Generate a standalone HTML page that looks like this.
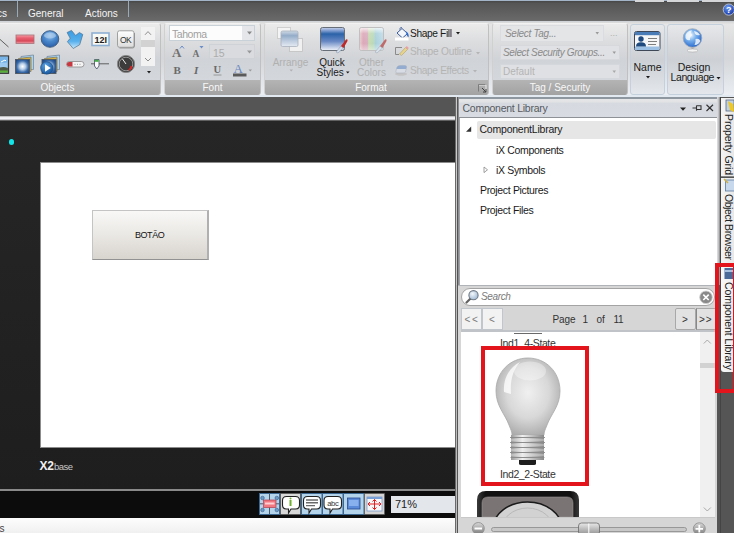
<!DOCTYPE html>
<html><head><meta charset="utf-8">
<style>
*{margin:0;padding:0;box-sizing:border-box}
html,body{width:734px;height:533px;overflow:hidden;background:#555;font-family:"Liberation Sans",sans-serif}
.a{position:absolute}
svg{overflow:visible}
#tabbar{left:0;top:0;width:734px;height:21px;background:linear-gradient(#4a4a4a 0,#4a4a4a 1px,#555 2px,#5e5e5e 50%,#6a6a6a 100%);border-top:1px solid #a4b4c8}
.tab{color:#f4f4f4;font-size:10px;top:7px;white-space:nowrap}
.tsep{top:0;width:1px;height:16px;background:#9aaabb}
#ribbon{left:0;top:20px;width:734px;height:77px;background:linear-gradient(#6c6c6c 0,#6c6c6c 1px,#c8cdd4 1px,#d8d9da 2px,#dcdcdc 3px,#e6e6e6 4px,#d8d9db 35%,#d4d6d9 50%,#e2e5e9 80%,#eceff3 100%)}
.grp{top:3px;height:72px;background:linear-gradient(#ebebeb 0%,#dcdddf 25%,#d0d3d7 50%,#d3d7dc 75%,#d8dce2 100%);border-radius:3px;border:1px solid #f2f2f2;border-left-color:#d0d0d0;border-right-color:#c0c0c0;border-bottom:0;overflow:hidden}
.grp2{top:4px;height:71px;background:linear-gradient(#e6e8ea 0%,#d6d8dc 30%,#cdd0d4 50%,#dadde1 80%,#e4e7eb 100%);border-radius:3px;border:1px solid #c4d0dc}
.glbl{left:0;right:0;bottom:0;height:15px;background:linear-gradient(#b4b4b4,#a2a2a2);color:#f8f8f8;font-size:10px;text-align:center;line-height:16px;white-space:nowrap}
#ribline{left:0;top:95px;width:734px;height:2px;background:#e2e9f0}
.t{position:absolute;white-space:nowrap;line-height:1}
#doctab{left:0;top:97px;width:455px;height:19px;background:#555}
#docline{left:0;top:115px;width:455px;height:6px;background:linear-gradient(#505050 0,#505050 1px,#c0c0c0 1px,#c0c0c0 2px,#ececf0 2px,#ececf0 3px,#f2f2f6 3px,#f2f2f6 4px,#c8c8cc 4px,#c8c8cc 5px,#606060 5px)}
#canvas{left:0;top:121px;width:455px;height:368px;background:linear-gradient(#262626,#1e1e1e)}
#screen{left:40px;top:162px;width:415px;height:286px;background:#fff;border:1px solid #8c8c8c;border-right:0}
#btmline{left:0;top:489px;width:455px;height:2px;background:#8a8a8a}
#btmbar{left:0;top:491px;width:455px;height:27px;background:#0c0c0c}
#status{left:0;top:518px;width:455px;height:15px;background:linear-gradient(#fdfdfd,#f0f0f0)}
#vsep{left:455px;top:97px;width:5px;height:188px;background:linear-gradient(90deg,#6a6a6a 0,#6a6a6a 1px,#cacaca 1px,#cacaca 2px,#555 2px,#555 3px,#8c8c8c 3px,#8c8c8c 4px,#9fa2a6 4px)}
#vsep2{left:455px;top:285px;width:3px;height:248px;background:linear-gradient(90deg,#6a6a6a 0,#6a6a6a 1px,#bcbcbc 1px,#bcbcbc 2px,#555 2px)}
#panel{left:460px;top:118px;width:257px;height:415px;background:#fff}

#rstrip{left:717px;top:97px;width:17px;height:436px;background:#555}
</style></head><body>
<div id="tabbar" class="a">
  <div class="a tab" style="left:-3px">cs</div>
  <div class="a tsep" style="left:17px"></div>
  <div class="a tab" style="left:28px">General</div>
  <div class="a tab" style="left:85px">Actions</div>
  <div class="a tsep" style="left:128px"></div>
</div>
<div class="a" style="left:635px;top:0;width:29px;height:1.5px;background:#d4d6d8"></div><div class="a" style="left:667px;top:0;width:32px;height:1.5px;background:#d4d6d8"></div><div class="a" style="left:702px;top:0;width:32px;height:1.5px;background:#d4d6d8"></div>
<div id="ribbon" class="a">
  <div class="a grp" style="left:-3px;width:164px"><div class="a glbl" style="text-align:left;padding-left:42.5px">Objects</div></div>
  <div class="a grp" style="left:164px;width:97px"><div class="a glbl">Font</div></div>
  <div class="a grp" style="left:264px;width:225px"><div class="a glbl" style="padding-right:11px">Format</div></div>
  <div class="a grp" style="left:492px;width:136px"><div class="a glbl">Tag / Security</div></div>
  <div class="a grp2" style="left:630px;width:35px"></div>
  <div class="a grp2" style="left:667px;width:57px"></div>
</div>
<!-- Objects icons -->
<svg class="a" style="left:0;top:20px" width="165" height="60" viewBox="0 20 165 60">
  <defs>
    <linearGradient id="gred" x1="0" y1="0" x2="0" y2="1"><stop offset="0" stop-color="#f4a0a8"/><stop offset=".35" stop-color="#e86070"/><stop offset=".7" stop-color="#d84858"/><stop offset="1" stop-color="#f0a0a8"/></linearGradient>
    <radialGradient id="gblue" cx=".5" cy=".3" r=".7"><stop offset="0" stop-color="#9cc4ec"/><stop offset=".5" stop-color="#4a88cc"/><stop offset="1" stop-color="#2a5ea8"/></radialGradient>
    <linearGradient id="gpoly" x1="0" y1="0" x2="0" y2="1"><stop offset="0" stop-color="#3a9ae0"/><stop offset=".6" stop-color="#58b0ec"/><stop offset="1" stop-color="#c8e8fc"/></linearGradient>
    <linearGradient id="gbtn" x1="0" y1="0" x2="0" y2="1"><stop offset="0" stop-color="#ffffff"/><stop offset="1" stop-color="#dcdcdc"/></linearGradient>
    <linearGradient id="gsky" x1="0" y1="0" x2="0" y2="1"><stop offset="0" stop-color="#4c8ed8"/><stop offset=".6" stop-color="#a8d4f4"/><stop offset="1" stop-color="#50b040"/></linearGradient>
    <radialGradient id="gburst" cx=".5" cy=".5" r=".6"><stop offset="0" stop-color="#ffffff"/><stop offset=".35" stop-color="#b8d0e8"/><stop offset=".7" stop-color="#3a6aa8"/><stop offset="1" stop-color="#1e4a88"/></radialGradient>
    <radialGradient id="gplay" cx=".4" cy=".3" r=".7"><stop offset="0" stop-color="#5aa0e0"/><stop offset="1" stop-color="#1a5aa0"/></radialGradient>
  </defs>
  <!-- line -->
  <line x1="-1" y1="38.5" x2="8.5" y2="47" stroke="#505050" stroke-width="0.9"/>
  <!-- red rect -->
  <rect x="16" y="35" width="18" height="8.5" fill="url(#gred)" stroke="#a87078" stroke-width="0.8"/>
  <!-- ellipse -->
  <ellipse cx="50" cy="39" rx="8.8" ry="8.3" fill="url(#gblue)" stroke="#3a5a80" stroke-width="0.9"/>
  <ellipse cx="50" cy="35.5" rx="6" ry="3" fill="#b8d4f0" opacity=".6"/>
  <!-- polygon -->
  <path d="M67.1 32.5 L71.5 30.4 L75.6 35.5 L79.4 32.5 L82.8 34.5 L79.7 44.7 L73.2 48.5 L67.4 41.7 L70.2 38.3 Z" fill="url(#gpoly)" stroke="#4a7090" stroke-width="0.7"/>
  <!-- 12I -->
  <rect x="92" y="33" width="17" height="12.5" fill="#f8f8f4" stroke="#8eb0d4" stroke-width="1.6"/>
  <text x="100.8" y="43.2" font-family="Liberation Sans" font-weight="bold" font-size="9" text-anchor="middle" fill="#202020">12I</text>
  <!-- OK -->
  <rect x="117.5" y="30.8" width="16.5" height="16.5" rx="2" fill="url(#gbtn)" stroke="#a0a0a0" stroke-width="1"/><path d="M134.5 33 V46 Q134.5 48 132.5 48 H119.5" fill="none" stroke="#888" stroke-width=".8"/>
  <text x="125.5" y="42.8" font-family="Liberation Sans" font-size="8.5" text-anchor="middle" fill="#303030" letter-spacing="-.6">OK</text>
  <!-- picture -->
  <rect x="-3" y="56" width="11.5" height="17.3" fill="#9ccaf0" stroke="#3a3a3a" stroke-width="1.3"/>
  <rect x="-2.3" y="56.7" width="10.2" height="6" fill="#78b4e8"/>
  <path d="M1 62 L5 60 L6 61" stroke="#fff" stroke-width="1" fill="none"/>
  <path d="M-2.3 69 Q2 65.5 7.9 68 V72.6 H-2.3 Z" fill="#505848"/>
  <rect x="-2.3" y="70.5" width="10.2" height="2.1" fill="#58b038"/>
  <!-- stack 1 -->
  <path d="M21 56.5 L33.5 55 V69.5 L21 70 Z" fill="#a8d4f4" stroke="#7a8a9a" stroke-width=".8"/>
  <path d="M18.5 58.5 L31 57 V71.5 L18.5 72 Z" fill="#d8b040" stroke="#7a7a6a" stroke-width=".8"/>
  <rect x="15.5" y="59.5" width="14" height="14" fill="url(#gburst)" stroke="#505860" stroke-width=".9"/>
  <!-- stack 2 -->
  <path d="M47 56.5 L59.5 55 V69.5 L47 70 Z" fill="#a8d4f4" stroke="#7a8a9a" stroke-width=".8"/>
  <path d="M44.5 58.5 L57 57 V71.5 L44.5 72 Z" fill="#d8b040" stroke="#7a7a6a" stroke-width=".8"/>
  <rect x="42" y="59.5" width="14" height="14" fill="url(#gburst)" stroke="#505860" stroke-width=".9"/>
  <circle cx="46.8" cy="68" r="6.2" fill="url(#gplay)" stroke="#1a4a80" stroke-width=".6"/>
  <path d="M45 64.2 L50.8 68 L45 71.8 Z" fill="#fff"/>
  <!-- thermometer -->
  <rect x="66.5" y="61.5" width="17.5" height="5.5" rx="2.75" fill="#f4f4f4" stroke="#8a8a8a" stroke-width=".8"/>
  <path d="M69.2 61.9 H72.5 V66.6 H69.2 A2.35 2.35 0 0 1 69.2 61.9 Z" fill="#c83840"/>
  <path d="M74.5 64.3 H75.5 M77 64.3 H78 M79.5 64.3 H80.5" stroke="#9a9a9a" stroke-width="1"/>
  <!-- slider -->
  <line x1="91" y1="63.8" x2="109" y2="63.8" stroke="#606060" stroke-width="1"/>
  <path d="M94.5 59.5 H99 V66 L96.75 69 L94.5 66 Z" fill="#fafafa" stroke="#404860" stroke-width=".8"/>
  <rect x="94.8" y="59.8" width="3.9" height="2" fill="#40b040"/>
  <!-- gauge -->
  <circle cx="126" cy="64" r="8.6" fill="#3c3c3c" stroke="#888" stroke-width="1"/>
  <circle cx="126" cy="64" r="6.8" fill="none" stroke="#d0d0d0" stroke-width=".6"/>
  <path d="M131.5 66 A6.5 6.5 0 0 1 129 70" stroke="#e02020" stroke-width="1.8" fill="none"/>
  <line x1="126" y1="64" x2="122.5" y2="59" stroke="#f0f0f0" stroke-width="1"/>
  <!-- scroll -->
  <rect x="141" y="27" width="14" height="13" fill="#f2f2f2"/>
  <rect x="141" y="40" width="14" height="7" fill="#d2d2d2"/>
  <rect x="141" y="47" width="14" height="19" fill="#f2f2f2"/>
  <path d="M145 34.8 L148 31.6 L151 34.8" fill="none" stroke="#808080" stroke-width=".9"/>
  <path d="M145 58 L148 61 L151 58" fill="none" stroke="#808080" stroke-width=".9"/>
  <path d="M147 71 H151 L149 73.5 Z" fill="#202020"/>
</svg>
<!-- Font group -->
<div class="a" style="left:169px;top:25px;width:86px;height:16px;background:#e4e6ea;border:1px solid #c8d0d8"></div>
<div class="a" style="left:170px;top:26px;width:72px;height:14px;background:#fcfcfc"></div>
<div class="t" style="left:172px;top:29px;font-size:10.5px;color:#a0a0a0;letter-spacing:-.45px">Tahoma</div>
<div class="a" style="left:209px;top:44px;width:46px;height:15px;background:#d9dbde;border:1px solid #cfd3d8"></div>
<div class="t" style="left:213px;top:48px;font-size:10.5px;color:#acacac">15</div>
<svg class="a" style="left:165px;top:22px" width="96" height="58" viewBox="165 22 96 58">
  <path d="M247 31.5 H252 L249.5 34.5 Z" fill="#888"/>
  <path d="M247 50.5 H252 L249.5 53.5 Z" fill="#999"/>
  <text x="172" y="56.5" font-family="Liberation Serif" font-weight="bold" font-size="13" fill="#707070">A</text>
  <path d="M180 48.5 L182 46 L184 48.5" fill="none" stroke="#6a8cc8" stroke-width="1"/>
  <text x="192.5" y="56.5" font-family="Liberation Serif" font-weight="bold" font-size="9.5" fill="#707070">A</text>
  <path d="M199.5 46 H203.5 L201.5 48.5 Z" fill="#6a8cc8"/>
  <text x="173.5" y="74" font-family="Liberation Serif" font-weight="bold" font-size="11" fill="#6a6a6a">B</text>
  <text x="194" y="74" font-family="Liberation Serif" font-style="italic" font-weight="bold" font-size="11" fill="#6a6a6a">I</text>
  <text x="213.5" y="73" font-family="Liberation Serif" font-weight="bold" font-size="10.5" fill="#6a6a6a">U</text>
  <line x1="213.5" y1="75" x2="221.5" y2="75" stroke="#888" stroke-width=".8"/>
  <text x="233.5" y="72.5" font-family="Liberation Serif" font-size="13" fill="#6a88c0">A</text>
  <rect x="233" y="73.5" width="13.5" height="3" fill="#5a5a5a"/>
  <path d="M248.5 69.5 H252 L250.25 71.5 Z" fill="#999"/>
</svg>
<!-- Format group -->
<svg class="a" style="left:264px;top:22px" width="226" height="72" viewBox="264 22 226 72">
  <defs>
    <linearGradient id="garr" x1="0" y1="0" x2="0" y2="1"><stop offset="0" stop-color="#d0dae6"/><stop offset=".3" stop-color="#94acc8"/><stop offset=".6" stop-color="#b8c8dc"/><stop offset="1" stop-color="#e4eaf2"/></linearGradient>
    <linearGradient id="gqs" x1="0" y1="0" x2="0" y2="1"><stop offset="0" stop-color="#c8d4ec"/><stop offset=".12" stop-color="#8aa4d4"/><stop offset=".28" stop-color="#2a62a8"/><stop offset=".6" stop-color="#6888c4"/><stop offset="1" stop-color="#f0f4fa"/></linearGradient>
    <linearGradient id="goc" x1="0" y1="0" x2="1" y2="0"><stop offset="0" stop-color="#e8d0d0"/><stop offset=".15" stop-color="#dca8b8"/><stop offset=".35" stop-color="#d8b0c0"/><stop offset=".38" stop-color="#c8dcb0"/><stop offset=".62" stop-color="#b8d8c0"/><stop offset=".65" stop-color="#a8d0dc"/><stop offset="1" stop-color="#c0dce8"/></linearGradient>
    <linearGradient id="gocv" x1="0" y1="0" x2="0" y2="1"><stop offset="0" stop-color="#fff" stop-opacity=".75"/><stop offset=".25" stop-color="#fff" stop-opacity=".1"/><stop offset=".7" stop-color="#fff" stop-opacity="0"/><stop offset="1" stop-color="#fff" stop-opacity=".4"/></linearGradient>
  </defs>
  <rect x="277.5" y="27.5" width="13" height="11" fill="#f4f4f4" stroke="#c8c8c8" stroke-width=".8"/>
  <rect x="289.5" y="38.5" width="13" height="13" fill="#f0f0f0" stroke="#c0c0c0" stroke-width=".8"/>
  <rect x="281" y="31" width="17" height="15.5" rx="1.5" fill="url(#garr)" stroke="#a8b0bc" stroke-width=".8"/>
  <text x="290.5" y="65.5" font-family="Liberation Sans" font-size="10" text-anchor="middle" fill="#b0b0b0">Arrange</text>
  <path d="M289.5 69.5 H293 L291.25 71.5 Z" fill="#b0b0b0"/>
  <rect x="320.5" y="27.5" width="24" height="23" rx="2" fill="url(#gqs)" stroke="#686e78" stroke-width="1"/>
  <path d="M336 52 L341 46 L343.5 48 L338 53 Z" fill="#d0dcea" stroke="#8090a8" stroke-width=".5"/>
  <path d="M341 46 L346 39.5 Q348 38.5 347.5 41 L343.5 48 Z" fill="#c02828"/>
  <text x="332" y="65.5" font-family="Liberation Sans" font-size="10" text-anchor="middle" fill="#1a1a1a">Quick</text>
  <text x="316.5" y="75.5" font-family="Liberation Sans" font-size="10" fill="#1a1a1a">Styles</text>
  <path d="M346 71.5 H349.5 L347.75 73.5 Z" fill="#1a1a1a"/>
  <rect x="359.5" y="27.5" width="24" height="23" rx="2" fill="url(#goc)" stroke="#c0c0c0" stroke-width="1"/><rect x="360" y="28" width="23" height="22" rx="1.5" fill="url(#gocv)"/>
  <path d="M375 52 L380 46 L382.5 48 L377 53 Z" fill="#d8e0ea" stroke="#98a4b4" stroke-width=".5"/>
  <path d="M380 46 L385 39.5 Q387 38.5 386.5 41 L382.5 48 Z" fill="#c06a6a"/>
  <text x="371.5" y="65.5" font-family="Liberation Sans" font-size="10" text-anchor="middle" fill="#b0b0b0">Other</text>
  <text x="371.5" y="75.5" font-family="Liberation Sans" font-size="10" text-anchor="middle" fill="#b0b0b0">Colors</text>
  <!-- shape fill -->
  <path d="M397 33 L402 28.5 L407.5 33.5 L402.5 38 Z" fill="#f4f8fc" stroke="#3a5a98" stroke-width="1"/>
  <path d="M399.5 29.5 Q400 27 402 27.5" fill="none" stroke="#3a5a98" stroke-width=".8"/>
  <path d="M405.5 31 Q409.5 33 408.5 37.5 Q407 36 406.5 34 Z" fill="#2a6ad0"/>
  <rect x="395" y="37.5" width="13.5" height="3" fill="#fff"/>
  <text x="410" y="36.8" font-family="Liberation Sans" font-size="10.2" fill="#1a1a1a" textLength="42">Shape Fill</text>
  <path d="M456 32 H460 L458 34.5 Z" fill="#1a1a1a"/>
  <path d="M402 47.5 H395.5 V54.5 H399" fill="none" stroke="#8a8a8a" stroke-width="1"/>
  <path d="M399.5 54 L405.5 47.5 L407.5 49.5 L401.5 55.5 Z" fill="#e8d488" stroke="#a89868" stroke-width=".5"/>
  <path d="M405.5 47.5 L406.8 46 L408.8 48 L407.5 49.5 Z" fill="#e8a0a0"/>
  <text x="410" y="55.3" font-family="Liberation Sans" font-size="10.2" fill="#b4b4b4" textLength="62">Shape Outline</text>
  <path d="M476 52 H480 L478 54.5 Z" fill="#b4b4b4"/>
  <ellipse cx="401" cy="74" rx="6" ry="1.8" fill="#c4c4c4"/>
  <path d="M397 67 Q398 65.5 400 65.5 H405 Q407 65.5 406.5 67.5 L405.5 72 Q405 73 403 73 H397 Q395.5 73 395.8 71.5 Z" fill="#d8dce4" stroke="#b0b4bc" stroke-width=".6"/>
  <path d="M397 67 Q398 65.5 400 65.5 H405 Q407 65.5 406.5 67.5 L406 69 H396.5 Z" fill="#94acd0"/>
  <text x="410" y="73.6" font-family="Liberation Sans" font-size="10.2" fill="#b4b4b4" textLength="59">Shape Effects</text>
  <path d="M473 70 H477 L475 72.5 Z" fill="#b4b4b4"/>
  <path d="M479 85 H486 V92" fill="none" stroke="#e8e8e8" stroke-width="1"/>
  <path d="M478.5 84.5 H485.5 M478.5 84.5 V91.5" fill="none" stroke="#707070" stroke-width=".8"/>
  <path d="M482 88 L486 92 M486 89 V92 H483" fill="none" stroke="#404040" stroke-width="1"/>
</svg>
<!-- Tag / Security -->
<div class="a" style="left:500px;top:25px;width:104px;height:17px;background:#e4e5e7;border:1px solid #dadcdf"></div>
<div class="t" style="left:505px;top:29px;font-size:10px;font-style:italic;color:#8a8a8a;letter-spacing:-.3px">Select Tag...</div>
<div class="t" style="left:610px;top:29px;font-size:9px;color:#b0b0b0">...</div>
<div class="a" style="left:500px;top:45px;width:120px;height:15px;background:#e0e1e4;border:1px solid #d6d8dc"></div>
<div class="t" style="left:503px;top:48px;font-size:10px;font-style:italic;color:#8a8a8a;letter-spacing:-.35px">Select Security Groups...</div>
<div class="a" style="left:500px;top:64px;width:120px;height:15px;background:#dfe0e3;border:1px solid #d4d7db"></div>
<div class="t" style="left:503px;top:66.5px;font-size:10px;color:#b4b4b4">Default</div>
<svg class="a" style="left:490px;top:20px" width="140" height="60" viewBox="490 20 140 60">
  <path d="M595.5 32 H599 L597.25 34.5 Z" fill="#9a9a9a"/>
  <path d="M612.5 51.5 H616 L614.25 54 Z" fill="#9a9a9a"/>
  <path d="M612.5 70.5 H616 L614.25 73 Z" fill="#a8a8a8"/>
</svg>
<!-- Name -->
<svg class="a" style="left:630px;top:24px" width="95" height="70" viewBox="630 24 95 70">
  <defs>
    <linearGradient id="gcard" x1="0" y1="0" x2="0" y2="1"><stop offset="0" stop-color="#5a8ac0"/><stop offset=".2" stop-color="#f8f8f8"/><stop offset=".8" stop-color="#f0f0f0"/><stop offset="1" stop-color="#8ab0d8"/></linearGradient>
    <radialGradient id="gglobe" cx=".4" cy=".35" r=".65"><stop offset="0" stop-color="#f0f8ff"/><stop offset=".45" stop-color="#78b0ec"/><stop offset="1" stop-color="#2a6ad0"/></radialGradient>
  </defs>
  <rect x="634.5" y="31.5" width="25.5" height="19" rx="2" fill="#f6f6f6" stroke="#3e4856" stroke-width="1"/>
  <rect x="635" y="32" width="24.5" height="3.2" fill="#4a7cb8"/>
  <rect x="635" y="46.5" width="24.5" height="3.5" fill="#9cc0e4"/>
  <circle cx="641" cy="39" r="2.7" fill="#1e4a80"/>
  <path d="M636 46.5 Q636 42.3 641 42.3 Q646 42.3 646 46.5 Z" fill="#1e4a80"/>
  <path d="M648 38.5 H657 M648 41.5 H657 M648 44.5 H656" stroke="#707070" stroke-width=".9"/>
  <text x="647.5" y="70.5" font-family="Liberation Sans" font-size="10.5" text-anchor="middle" fill="#1a1a1a">Name</text>
  <path d="M646 76 H650 L648 78.5 Z" fill="#1a1a1a"/>
  <circle cx="692.5" cy="38" r="9.3" fill="url(#gglobe)" stroke="#a0a8b4" stroke-width=".8"/>
  <path d="M685.5 35 Q688 30 692 30.5 Q690 33 692.5 35 Q689.5 37 690 40 Q687 41 685.5 38 Z M694 31 Q698 31.5 700 35 Q697 36 695 34 Z M695.5 39 Q699 38 700.5 41 Q698 45.5 694.5 45 Q696 42 695.5 39 Z" fill="#f4f8fc" opacity=".85"/>
  <rect x="691.5" y="47" width="2" height="3" fill="#b0b0b0"/>
  <ellipse cx="692.5" cy="50.5" rx="5.5" ry="1.6" fill="#f4f4f4" stroke="#a8a8a8" stroke-width=".6"/>
  <text x="694" y="70.8" font-family="Liberation Sans" font-size="10.5" text-anchor="middle" fill="#1a1a1a">Design</text>
  <text x="670.5" y="80.7" font-family="Liberation Sans" font-size="10.5" fill="#1a1a1a" letter-spacing="-.4">Language</text>
  <path d="M716.5 77 H720.5 L718.5 79.5 Z" fill="#1a1a1a"/>
</svg>
<!-- help -->
<svg class="a" style="left:720px;top:2px" width="14" height="16" viewBox="720 2 14 16">
  <defs><radialGradient id="ghelp" cx=".4" cy=".3" r=".7"><stop offset="0" stop-color="#6a9af0"/><stop offset="1" stop-color="#1a3aa8"/></radialGradient></defs>
  <circle cx="728.8" cy="9.6" r="5.6" fill="url(#ghelp)" stroke="#c8d0e0" stroke-width=".8"/>
  <text x="728.8" y="13" font-family="Liberation Sans" font-weight="bold" font-size="9" text-anchor="middle" fill="#fff">?</text>
</svg>
<div id="ribline" class="a"></div>
<div id="doctab" class="a"></div>
<div id="docline" class="a"></div>
<div id="canvas" class="a"></div>
<div id="screen" class="a"></div>
<div class="a" style="left:8.7px;top:139.4px;width:5.6px;height:5.6px;border-radius:50%;background:#12e4e8"></div>
<div class="a" style="left:92px;top:210px;width:117px;height:50px;background:linear-gradient(#f8f8f7,#eae8e4 50%,#d8d4ce);border:1px solid #c4c4c4;border-right:2px solid #b0b0b0;border-bottom:1.5px solid #929292"></div>
<div class="t" style="left:135px;top:231px;font-size:9px;color:#111;letter-spacing:-.45px">BOTÃO</div>
<div class="t" style="left:39.5px;top:459.5px;font-size:12px;font-weight:bold;color:#f0f0f0;letter-spacing:-.3px">X2</div>
<div class="t" style="left:54px;top:461.5px;font-size:9.5px;color:#c8c8c8;letter-spacing:-.5px">base</div>
<div id="btmline" class="a"></div>
<div id="btmbar" class="a"></div>
<!-- bottom toolbar icons -->
<svg class="a" style="left:255px;top:490px" width="200" height="28" viewBox="255 490 200 28">
  <rect x="259.5" y="493.5" width="20" height="21" fill="#b4d4ec" stroke="#3a6690" stroke-width="1"/>
  <path d="M269.5 494 V500 M269.5 507 V514 M260 503.8 H263.5 M276 503.8 H279" stroke="#303a48" stroke-width=".8"/>
  <rect x="263.5" y="500" width="12.5" height="7.5" fill="#f07880" stroke="#b04050" stroke-width=".7"/>
  <rect x="265" y="502.5" width="9.5" height="2" fill="#ffd0d4"/>
  <circle cx="262.5" cy="498" r="1.8" fill="#6a9ac8" stroke="#2a4a70" stroke-width=".5"/><circle cx="276.8" cy="498" r="1.8" fill="#6a9ac8" stroke="#2a4a70" stroke-width=".5"/>
  <circle cx="262.5" cy="510" r="1.8" fill="#6a9ac8" stroke="#2a4a70" stroke-width=".5"/><circle cx="276.8" cy="510" r="1.8" fill="#6a9ac8" stroke="#2a4a70" stroke-width=".5"/>
  <rect x="280.5" y="493.5" width="20" height="21" fill="#d8d8d8" stroke="#555" stroke-width=".6"/>
  <path d="M282.5 500.5 Q282.5 496.5 286.5 496.5 H295.5 Q299.5 496.5 299.5 500.5 V505 Q299.5 509 295.5 509 H291 L288.5 513 V509 H286.5 Q282.5 509 282.5 505 Z" fill="#fff" stroke="#202020" stroke-width="1.1"/>
  <rect x="289.5" y="500" width="2" height="6" fill="#70b030"/><circle cx="290.5" cy="498.5" r="1" fill="#70b030"/>
  <rect x="301.5" y="493.5" width="20.5" height="21" fill="#b4d4ec" stroke="#3a6690" stroke-width="1"/>
  <path d="M303.5 500.5 Q303.5 496.5 307.5 496.5 H316.5 Q320.5 496.5 320.5 500.5 V505 Q320.5 509 316.5 509 H311.5 L309 513 V509 H307.5 Q303.5 509 303.5 505 Z" fill="#fff" stroke="#202020" stroke-width="1.1"/>
  <path d="M306 500 H318 M306 502.8 H318 M306 505.6 H315" stroke="#6a6a6a" stroke-width="1.4"/>
  <rect x="322.5" y="493.5" width="20.5" height="21" fill="#b4d4ec" stroke="#3a6690" stroke-width="1"/>
  <path d="M324 500.5 Q324 496.5 328 496.5 H337.5 Q341.5 496.5 341.5 500.5 V505 Q341.5 509 337.5 509 H332.5 L330 513 V509 H328 Q324 509 324 505 Z" fill="#fff" stroke="#202020" stroke-width="1.1"/>
  <text x="332.8" y="505.5" font-family="Liberation Sans" font-size="7.5" text-anchor="middle" fill="#333" letter-spacing="-.3">abc</text>
  <rect x="343.5" y="493.5" width="20.5" height="21" fill="#b4d4ec" stroke="#3a6690" stroke-width="1"/>
  <rect x="347.5" y="498" width="12.5" height="11" fill="#5a8ad8" stroke="#2a4a90" stroke-width=".8"/>
  <rect x="349" y="500" width="9.5" height="6" fill="#88b0ec"/>
  <rect x="364.5" y="493.5" width="20" height="21" fill="#d4d4d4" stroke="#555" stroke-width=".6"/>
  <rect x="367" y="497" width="15" height="14" fill="#f8f8f8" stroke="#7a9ac8" stroke-width=".8"/>
  <rect x="367" y="497" width="15" height="2" fill="#7aa0d8"/>
  <path d="M368 504 H381 M374.5 499.5 V509.5" stroke="#e02020" stroke-width="1"/>
  <path d="M368 504 L370 502 M368 504 L370 506 M381 504 L379 502 M381 504 L379 506 M374.5 499.5 L372.5 501.5 M374.5 499.5 L376.5 501.5 M374.5 509.5 L372.5 507.5 M374.5 509.5 L376.5 507.5" stroke="#e02020" stroke-width="1"/>
</svg>
<div class="a" style="left:390.5px;top:495.5px;width:66px;height:17.5px;background:#e3e6eb"></div>
<div class="t" style="left:395px;top:499px;font-size:11px;color:#222">71%</div>
<div id="status" class="a"></div>
<div class="t" style="left:-0.5px;top:523.5px;font-size:10px;color:#444">s</div>
<div id="vsep" class="a"></div><div id="vsep2" class="a"></div>
<div id="panel" class="a"></div>
<!-- header -->
<div class="a" style="left:459px;top:97px;width:259px;height:1.5px;background:#8e96a0"></div><div class="a" style="left:459px;top:98.5px;width:259px;height:19.5px;background:linear-gradient(#e6e6e8 0,#e2e3e5 15%,#d6dae0 25%,#d8dce2 100%);border-bottom:1px solid #8e9296"></div>
<div class="t" style="left:462.5px;top:103px;font-size:10.5px;color:#565a60;letter-spacing:-.25px">Component Library</div>
<svg class="a" style="left:675px;top:100px" width="45" height="16" viewBox="675 100 45 16">
  <path d="M680 107.5 H686 L683 110.8 Z" fill="#222"/>
  <path d="M692.5 108 H696.5 M696.5 105.5 V110.7 M696.5 105.8 H701 V109.5 H696.5" fill="none" stroke="#333" stroke-width="1.1"/>
  <path d="M706.5 104.8 L713 111 M713 104.8 L706.5 111" stroke="#333" stroke-width="1.2"/>
</svg>
<!-- tree -->
<div class="a" style="left:477px;top:120.5px;width:239px;height:18.5px;background:#e6e6e6;border-radius:2px"></div>
<svg class="a" style="left:460px;top:120px" width="40" height="60" viewBox="460 120 40 60">
  <path d="M466 131.8 L471.2 126.6 V131.8 Z" fill="#333"/>
  <path d="M484 167 L487.5 169.8 L484 172.6 Z" fill="none" stroke="#888" stroke-width=".8"/>
</svg>
<div class="t" style="left:479.5px;top:124px;font-size:10.5px;color:#1a1a1a;letter-spacing:-.22px">ComponentLibrary</div>
<div class="t" style="left:496px;top:144.5px;font-size:10.5px;color:#1a1a1a;letter-spacing:-.33px">iX Components</div>
<div class="t" style="left:496px;top:164.5px;font-size:10.5px;color:#1a1a1a;letter-spacing:-.33px">iX Symbols</div>
<div class="t" style="left:480px;top:185px;font-size:10.5px;color:#1a1a1a;letter-spacing:-.34px">Project Pictures</div>
<div class="t" style="left:480px;top:205px;font-size:10.5px;color:#1a1a1a;letter-spacing:-.34px">Project Files</div>
<!-- search area -->
<div class="a" style="left:458px;top:285px;width:262px;height:248px;background:#d6d6d6;border-top:1px solid #b0b4b8"></div>
<div class="a" style="left:461px;top:288px;width:254px;height:17.5px;background:#fff;border:1px solid #a4a4a4;border-radius:9px"></div>
<svg class="a" style="left:462px;top:288px" width="20" height="18" viewBox="462 288 20 18">
  <defs><radialGradient id="gmag" cx=".4" cy=".35" r=".6"><stop offset="0" stop-color="#f4f8fc"/><stop offset="1" stop-color="#a8c0d8"/></radialGradient></defs>
  <path d="M466.5 302.5 L470.5 298.5" stroke="#606060" stroke-width="2.2" stroke-linecap="round"/>
  <circle cx="473.5" cy="295.2" r="4.6" fill="url(#gmag)" stroke="#707a84" stroke-width="1.1"/>
</svg>
<div class="t" style="left:481px;top:292px;font-size:10px;font-style:italic;color:#7a7a7a;letter-spacing:-.35px">Search</div>
<svg class="a" style="left:697px;top:289px" width="18" height="16" viewBox="697 289 18 16">
  <circle cx="706" cy="297.3" r="6.3" fill="#8a8a8a" stroke="#d0d0d0" stroke-width=".8"/>
  <path d="M703.3 294.6 L708.7 300 M708.7 294.6 L703.3 300" stroke="#fff" stroke-width="1.6"/>
</svg>
<!-- pager -->
<div class="a" style="left:461px;top:308px;width:20.5px;height:21.5px;background:#f2f2f2;border:1px solid #c0c6cc"></div>
<div class="a" style="left:482px;top:308px;width:20.5px;height:21.5px;background:#f2f2f2;border:1px solid #c0c6cc"></div>
<div class="a" style="left:674.5px;top:308px;width:21px;height:21.5px;background:#e2e2e2;border:1px solid #a8a8a8;border-radius:2px"></div>
<div class="a" style="left:695.5px;top:308px;width:20px;height:21.5px;background:#e2e2e2;border:1px solid #a8a8a8;border-left-color:#888"></div>
<div class="t" style="left:464.5px;top:315px;font-size:10px;color:#7a7a7a;letter-spacing:1.6px">&lt;&lt;</div>
<div class="t" style="left:489px;top:315px;font-size:10px;color:#7a7a7a">&lt;</div>
<div class="t" style="left:682px;top:315px;font-size:10px;color:#333">&gt;</div>
<div class="t" style="left:699px;top:315px;font-size:10px;color:#333;letter-spacing:1px">&gt;&gt;</div>
<div class="t" style="left:552.5px;top:315px;font-size:10px;color:#333;letter-spacing:-.1px">Page</div><div class="t" style="left:582.5px;top:315px;font-size:10px;color:#333">1</div><div class="t" style="left:596.5px;top:315px;font-size:10px;color:#333">of</div><div class="t" style="left:613.5px;top:315px;font-size:10px;color:#333;letter-spacing:-.3px">11</div>
<!-- list -->
<div class="a" style="left:461px;top:330px;width:254px;height:188px;background:#fff;border-top:2px solid #c0c4c8;border-bottom:1px solid #c8c8c8"></div>
<div class="a" style="left:700px;top:332px;width:15px;height:185px;background:#f0f0f0"></div>
<div class="a" style="left:700px;top:362.5px;width:15px;height:5.5px;background:#d2d2d2"></div>
<svg class="a" style="left:700px;top:332px" width="15" height="185" viewBox="700 332 15 185">
  <path d="M703.8 343.5 L707.3 340 L710.8 343.5" fill="none" stroke="#a0a0a0" stroke-width=".9"/>
  <path d="M703.8 507.5 L707.3 511 L710.8 507.5" fill="none" stroke="#a0a0a0" stroke-width=".9"/>
</svg>
<div class="a" style="left:460px;top:332px;width:240px;height:185px;overflow:hidden"><div class="a" style="left:0;top:-1px;width:240px;height:186px">
  <div class="a" style="left:53.5px;top:1.8px;width:28.5px;height:1.2px;background:#6a6a6a"></div>
  <div class="t" style="left:40px;top:7px;font-size:10.5px;color:#333;letter-spacing:-.4px">Ind1_4-State</div>
  <svg class="a" style="left:0;top:0" width="240" height="186" viewBox="460 331 240 186">
    <defs>
      <radialGradient id="gbulb" cx=".5" cy=".45" r=".6"><stop offset="0" stop-color="#f0f0f0"/><stop offset=".55" stop-color="#d8d8d8"/><stop offset="1" stop-color="#a8a8a8"/></radialGradient>
      <linearGradient id="gscrew" x1="0" y1="0" x2="1" y2="0"><stop offset="0" stop-color="#9a9a9a"/><stop offset=".35" stop-color="#f0f0f0"/><stop offset=".7" stop-color="#b8b8b8"/><stop offset="1" stop-color="#8a8a8a"/></linearGradient>
      <linearGradient id="gknob" x1="0" y1="0" x2="1" y2="0"><stop offset="0" stop-color="#3a3a3a"/><stop offset=".08" stop-color="#111"/><stop offset=".92" stop-color="#111"/><stop offset="1" stop-color="#3a3a3a"/></linearGradient>
    </defs>
    <path d="M528 358 C546 358 560 372 560 391 C560 406 551 414 547 425 C545 430 544 432 544 435 H512 C512 432 511 430 509 425 C505 414 496 406 496 391 C496 372 510 358 528 358 Z" fill="url(#gbulb)" stroke="#a8a8a8" stroke-width=".8"/>
    <ellipse cx="530" cy="371" rx="16" ry="9.5" fill="#fff" opacity=".35"/>
    <path d="M504 392 C503 378 510 367 520 362 C513 370 510 380 511 394 Z" fill="#fff" opacity=".75"/>
    <rect x="511" y="435" width="33" height="25" fill="url(#gscrew)"/>
    <path d="M510.5 437.5 H544.5 M510.5 442.5 H544.5 M510.5 447.5 H544.5 M510.5 452.5 H544.5 M511 457.5 H544" stroke="#8c8c8c" stroke-width="1.1" stroke-linecap="round"/>
    <path d="M510.5 440 H544.5 M510.5 445 H544.5 M510.5 450 H544.5 M510.5 455 H544.5" stroke="#e8e8e8" stroke-width=".9" opacity=".8"/>
    <path d="M519 460 H536 V463.5 Q536 465 534 465 H521 Q519 465 519 463.5 Z" fill="#1e1e1e"/>
    <path d="M486 491 H570 Q579 491 579 500 V517 H477 V500 Q477 491 486 491 Z" fill="url(#gknob)"/>
    <path d="M488 497 H567 Q573 497 573 503 V517 H482 V503 Q482 497 488 497 Z" fill="#7a7474" stroke="#9a9494" stroke-width=".6"/>
    <ellipse cx="527.5" cy="530" rx="35" ry="28" fill="#d2d2d2" stroke="#1a1a1a" stroke-width="1.5"/>
    <ellipse cx="527.5" cy="532" rx="27" ry="24" fill="none" stroke="#b8b8b8" stroke-width="1"/>
  </svg>
  <div class="a" style="left:21px;top:15px;width:108px;height:140px;border:4px solid #e4141c"></div>
  <div class="t" style="left:40px;top:137.8px;font-size:10.5px;color:#333;letter-spacing:-.4px">Ind2_2-State</div>
</div></div>
<!-- zoom bar -->

<svg class="a" style="left:460px;top:517px" width="257" height="16" viewBox="460 517 257 16">
  <defs><linearGradient id="gthumb" x1="0" y1="0" x2="0" y2="1"><stop offset="0" stop-color="#e8e8e8"/><stop offset="1" stop-color="#909090"/></linearGradient>
  <linearGradient id="gcirc" x1="0" y1="0" x2="0" y2="1"><stop offset="0" stop-color="#d8d8d8"/><stop offset="1" stop-color="#7a7a7a"/></linearGradient></defs>
  <circle cx="478.3" cy="528.5" r="6" fill="url(#gcirc)" stroke="#8a8a8a" stroke-width=".8"/>
  <rect x="474.5" y="527.5" width="7.5" height="2" fill="#fff"/>
  <rect x="491.5" y="527.5" width="195" height="4" rx="2" fill="#c8c8c8" stroke="#8a8a8a" stroke-width=".8"/>
  <rect x="578.5" y="523" width="21" height="12" rx="3" fill="url(#gthumb)" stroke="#6a6a6a" stroke-width=".8"/>
  <line x1="588.8" y1="523.5" x2="588.8" y2="533" stroke="#fff" stroke-width="1"/>
  <circle cx="699.3" cy="528.8" r="6" fill="url(#gcirc)" stroke="#8a8a8a" stroke-width=".8"/>
  <path d="M695.5 528.8 H703 M699.3 525 V532.5" stroke="#fff" stroke-width="1.8"/>
</svg>
<!-- right strip -->
<div id="rstrip" class="a"></div>
<div class="a" style="left:717px;top:97px;width:4px;height:188px;background:linear-gradient(90deg,#d8d8dc 0,#d8d8dc 1px,#c0c2c6 1px,#c0c2c6 2px,#9a9a9a 2px,#9a9a9a 3px,#444 3px)"></div><div class="a" style="left:720px;top:285px;width:1px;height:248px;background:#444"></div>
<div class="a" style="left:721px;top:98px;width:13px;height:79px;background:linear-gradient(90deg,#f4f4f4,#e8e8e8);border-bottom:1px solid #888"></div>
<div class="a" style="left:721px;top:178px;width:13px;height:86px;background:linear-gradient(90deg,#f4f4f4,#e8e8e8)"></div>
<div class="a" style="left:721px;top:265px;width:13px;height:107px;background:linear-gradient(90deg,#f8f8f8,#ececec);border-radius:0 0 0 3px"></div>
<div class="t" style="left:734px;top:114px;font-size:10.5px;color:#222;transform-origin:0 0;transform:rotate(90deg);letter-spacing:-.12px">Property Grid</div>
<div class="t" style="left:734px;top:193.5px;font-size:10.5px;color:#222;transform-origin:0 0;transform:rotate(90deg);letter-spacing:-.45px">Object Browser</div>
<div class="t" style="left:734px;top:282px;font-size:10.5px;color:#222;transform-origin:0 0;transform:rotate(90deg);letter-spacing:-.08px">Component Library</div>
<svg class="a" style="left:721px;top:98px" width="13" height="200" viewBox="721 98 13 200">
  <rect x="726" y="100" width="8" height="11" fill="#c0d0e4" stroke="#5a6a80" stroke-width=".8"/>
  <path d="M728 101 L733 104 L734 112 L730 110 Z" fill="#f0c820"/>
  <rect x="725.5" y="180" width="9" height="11" fill="#c8d8ec" stroke="#5a7aa0" stroke-width=".8"/>
  <path d="M724 179 L728 183" stroke="#d0b040" stroke-width="1.5"/>
  <rect x="724.5" y="268" width="10" height="11" fill="#4a6a9a"/>
  <rect x="724.5" y="270" width="10" height="2" fill="#a8c0e0"/>
</svg>
<div class="a" style="left:715px;top:263px;width:22px;height:130px;border:4px solid #e4141c"></div>
</body></html>
